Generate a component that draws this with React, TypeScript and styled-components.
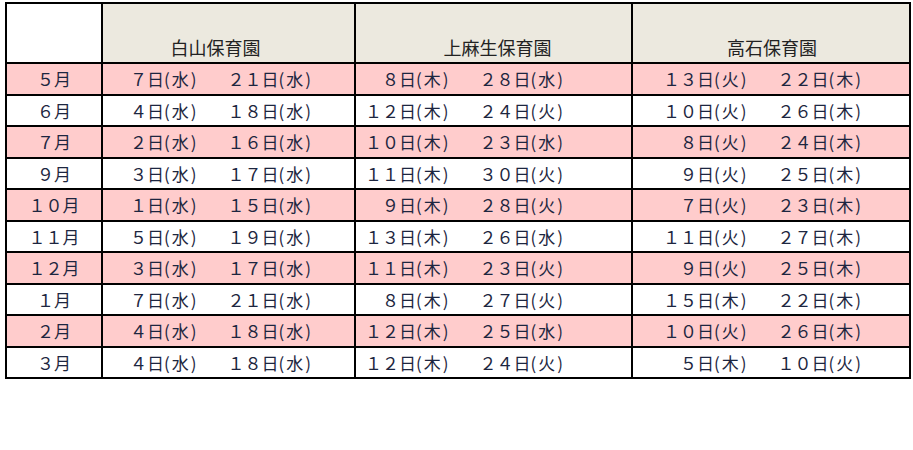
import React from 'react'
import styled, { createGlobalStyle } from 'styled-components'

const GlobalStyle = createGlobalStyle`
    html, body {
        margin: 0;
        padding: 0;
        background: #ffffff;
    }
    body {
        font-family: "Noto Sans CJK JP", "Noto Sans", sans-serif;
    }
`

interface Facility {
    name: string
    width: number
    pad: number
    headerShift: number
}

// [day, weekday]
type Visit = [string, string]

const facilities: Facility[] = [
    { name: '白山保育園', width: 253, pad: 27, headerShift: -26 },
    { name: '上麻生保育園', width: 277, pad: 9, headerShift: 8 },
    { name: '高石保育園', width: 278, pad: 30, headerShift: 2 },
]

const rows: { month: string; visits: [Visit, Visit][] }[] = [
    { month: '５月', visits: [[['７', '水'], ['２１', '水']], [['　８', '木'], ['２８', '水']], [['１３', '火'], ['２２', '木']]] },
    { month: '６月', visits: [[['４', '水'], ['１８', '水']], [['１２', '木'], ['２４', '火']], [['１０', '火'], ['２６', '木']]] },
    { month: '７月', visits: [[['２', '水'], ['１６', '水']], [['１０', '木'], ['２３', '水']], [['　８', '火'], ['２４', '木']]] },
    { month: '９月', visits: [[['３', '水'], ['１７', '水']], [['１１', '木'], ['３０', '火']], [['　９', '火'], ['２５', '木']]] },
    { month: '１０月', visits: [[['１', '水'], ['１５', '水']], [['　９', '木'], ['２８', '火']], [['　７', '火'], ['２３', '木']]] },
    { month: '１１月', visits: [[['５', '水'], ['１９', '水']], [['１３', '木'], ['２６', '水']], [['１１', '火'], ['２７', '木']]] },
    { month: '１２月', visits: [[['３', '水'], ['１７', '水']], [['１１', '木'], ['２３', '火']], [['　９', '火'], ['２５', '木']]] },
    { month: '１月', visits: [[['７', '水'], ['２１', '水']], [['　８', '木'], ['２７', '火']], [['１５', '木'], ['２２', '木']]] },
    { month: '２月', visits: [[['４', '水'], ['１８', '水']], [['１２', '木'], ['２５', '水']], [['１０', '火'], ['２６', '木']]] },
    { month: '３月', visits: [[['４', '水'], ['１８', '水']], [['１２', '木'], ['２４', '火']], [['　５', '木'], ['１０', '火']]] },
]

const VisitDate = ({ visit, second }: { visit: Visit; second?: boolean }) => (
    <DateText $second={second}>
        {visit[0]}日<Weekday>({visit[1]})</Weekday>
    </DateText>
)

export default function App() {
    return (
        <>
            <GlobalStyle />
            <Page>
                <Table>
                    <colgroup>
                        <col style={{ width: 96 }} />
                        {facilities.map((f) => (
                            <col key={f.name} style={{ width: f.width }} />
                        ))}
                    </colgroup>
                    <thead>
                        <tr>
                            <Corner />
                            {facilities.map((f) => (
                                <HeadCell key={f.name} $shift={f.headerShift}>
                                    {f.name}
                                </HeadCell>
                            ))}
                        </tr>
                    </thead>
                    <tbody>
                        {rows.map((row, i) => (
                            <Row key={row.month} $pink={i % 2 === 0}>
                                <MonthCell>{row.month}</MonthCell>
                                {facilities.map((f, j) => (
                                    <DateCell key={f.name} $pad={f.pad}>
                                        <VisitDate visit={row.visits[j][0]} />
                                        <VisitDate visit={row.visits[j][1]} second />
                                    </DateCell>
                                ))}
                            </Row>
                        ))}
                    </tbody>
                </Table>
            </Page>
        </>
    )
}

const Page = styled.div`
    padding: 2px 0 0 5px;
    width: 913px;
    height: 450px;
    box-sizing: border-box;
`

const Table = styled.table`
    border-collapse: collapse;
    table-layout: fixed;
    width: 906px;
    color: #1d2640;
    font-size: 17px;
    line-height: 1;
`

const Corner = styled.th`
    background: #ffffff;
    border: 2px solid #000000;
    height: 52px;
    padding: 0;
`

const HeadCell = styled.th<{ $shift: number }>`
    background: #ece9df;
    border: 2px solid #000000;
    height: 52px;
    padding: 0 0 6px ${(p) => (p.$shift > 0 ? p.$shift : 0)}px;
    padding-right: ${(p) => (p.$shift < 0 ? -p.$shift : 0)}px;
    vertical-align: bottom;
    text-align: center;
    font-weight: 400;
    font-size: 18px;
    color: #222222;
`

const Row = styled.tr<{ $pink: boolean }>`
    height: 31.5px;
    background: ${(p) => (p.$pink ? '#ffcccc' : '#ffffff')};
`

const MonthCell = styled.td`
    border: 2px solid #000000;
    padding: 0;
    text-align: center;
    vertical-align: middle;
`

const DateCell = styled.td<{ $pad: number }>`
    border: 2px solid #000000;
    padding: 0 0 0 ${(p) => p.$pad}px;
    text-align: left;
    vertical-align: middle;
    white-space: pre;
`

const DateText = styled.span<{ $second?: boolean }>`
    margin-left: ${(p) => (p.$second ? 29 : 0)}px;
`

const Weekday = styled.span`
    letter-spacing: 2px;
`
